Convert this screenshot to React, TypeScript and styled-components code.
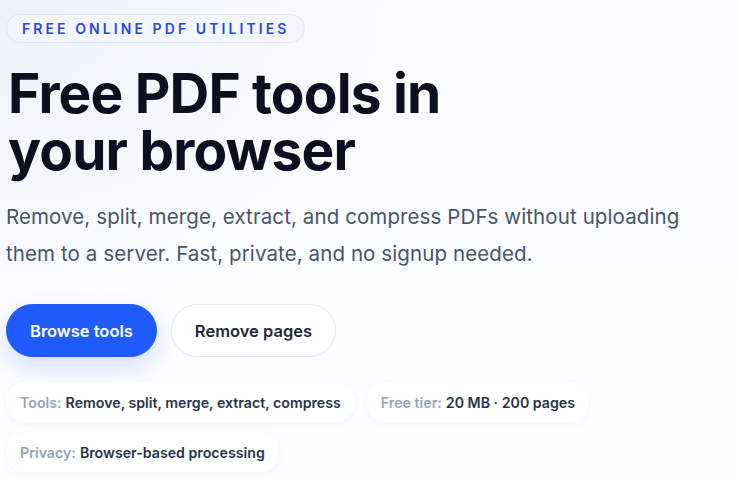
import styled, { createGlobalStyle } from "styled-components";

const GlobalStyle = createGlobalStyle`
  html, body {
    margin: 0;
    padding: 0;
  }
  body {
    font-family: Inter, "Noto Sans", sans-serif;
    background: #ffffff;
  }
`;

const Hero = styled.section`
  min-height: 485px;
  box-sizing: border-box;
  padding: 14px 0 0 6px;
  background:
    radial-gradient(ellipse 70% 80% at 0% 0%, #edf1fb 0%, rgba(240, 244, 252, 0.6) 45%, rgba(255, 255, 255, 0) 80%),
    linear-gradient(180deg, #fbfcff 0%, #fcfdff 100%);
  display: flex;
  flex-direction: column;
  align-items: flex-start;
`;

const Eyebrow = styled.div`
  display: inline-flex;
  align-items: center;
  height: 29px;
  box-sizing: border-box;
  padding: 0 15px;
  border: 1px solid #dfe6f8;
  border-radius: 999px;
  background: #f3f6ff;
  color: #2a48e0;
  font-size: 14px;
  font-weight: 600;
  letter-spacing: 0.22em;
  text-transform: uppercase;
`;

const Title = styled.h1`
  margin: 22px 0 0 2px;
  font-size: 55px;
  line-height: 57px;
  font-weight: 700;
  letter-spacing: -0.015em;
  color: #0b0f1f;
  max-width: 460px;
`;

const Lead = styled.p`
  margin: 20px 0 0 0;
  font-size: 20.5px;
  line-height: 36.5px;
  letter-spacing: 0.1px;
  color: #475569;
  max-width: 700px;
`;

const Actions = styled.div`
  display: flex;
  gap: 14px;
  margin-top: 32px;
`;

const Button = styled.button<{ $primary?: boolean }>`
  height: 53px;
  padding: 0 23px;
  border-radius: 999px;
  font-family: inherit;
  font-size: 16.5px;
  font-weight: 600;
  cursor: pointer;
  border: 1px solid ${(p) => (p.$primary ? "#1f5bff" : "#e3e7ef")};
  background: ${(p) => (p.$primary ? "#1f5bff" : "#ffffff")};
  color: ${(p) => (p.$primary ? "#ffffff" : "#1e293b")};
  box-shadow: ${(p) =>
    p.$primary ? "0 10px 24px rgba(31, 91, 255, 0.18)" : "none"};
`;

const Facts = styled.ul`
  list-style: none;
  margin: 25px 0 0 0;
  padding: 0;
  display: flex;
  flex-wrap: wrap;
  gap: 10px 12px;
  max-width: 620px;
`;

const Fact = styled.li`
  display: inline-flex;
  align-items: center;
  height: 40px;
  padding: 0 14px;
  border-radius: 999px;
  background: #ffffff;
  box-shadow: 0 2px 8px rgba(15, 23, 42, 0.04);
  font-size: 14.2px;
  font-weight: 600;
  color: #273449;
  white-space: nowrap;
`;

const FactLabel = styled.span`
  color: #94a3b8;
  margin-right: 4px;
`;

const facts = [
  { label: "Tools:", value: "Remove, split, merge, extract, compress" },
  { label: "Free tier:", value: "20 MB · 200 pages" },
  { label: "Privacy:", value: "Browser-based processing" },
];

export default function App() {
  return (
    <>
      <GlobalStyle />
      <Hero>
        <Eyebrow>Free online PDF utilities</Eyebrow>
        <Title>Free PDF tools in your browser</Title>
        <Lead>
          Remove, split, merge, extract, and compress PDFs without uploading
          them to a server. Fast, private, and no signup needed.
        </Lead>
        <Actions>
          <Button $primary>Browse tools</Button>
          <Button>Remove pages</Button>
        </Actions>
        <Facts>
          {facts.map((f) => (
            <Fact key={f.label}>
              <FactLabel>{f.label}</FactLabel>
              {f.value}
            </Fact>
          ))}
        </Facts>
      </Hero>
    </>
  );
}
